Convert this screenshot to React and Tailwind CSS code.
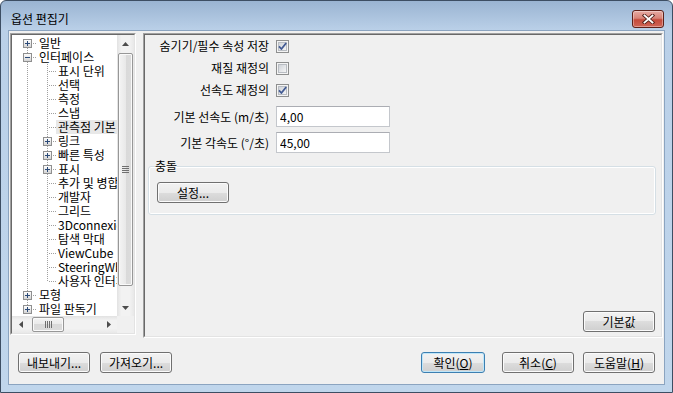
const TREE = [
  { label: "일반", level: 0, box: "+" },
  { label: "인터페이스", level: 0, box: "-" },
  { label: "표시 단위", level: 1 },
  { label: "선택", level: 1 },
  { label: "측정", level: 1 },
  { label: "스냅", level: 1 },
  { label: "관측점 기본", level: 1, selected: true },
  { label: "링크", level: 1, box: "+" },
  { label: "빠른 특성", level: 1, box: "+" },
  { label: "표시", level: 1, box: "+" },
  { label: "추가 및 병합", level: 1 },
  { label: "개발자", level: 1 },
  { label: "그리드", level: 1 },
  { label: "3Dconnexion", level: 1 },
  { label: "탐색 막대", level: 1 },
  { label: "ViewCube", level: 1 },
  { label: "SteeringWheels", level: 1 },
  { label: "사용자 인터페이스", level: 1, last: true },
  { label: "모형", level: 0, box: "+" },
  { label: "파일 판독기", level: 0, box: "+", last: true },
];

const DOT = { stroke: "#a0a0a0", strokeWidth: 1, strokeDasharray: "1 1", shapeRendering: "crispEdges" };

function Expander({ cx, sign }) {
  return (
    <g shapeRendering="crispEdges">
      <rect x={cx - 4} y="3.5" width="8" height="8" fill="url(#treebox)" stroke="#8f8f8f" />
      <line x1={cx - 2.5} y1="7.5" x2={cx + 2.5} y2="7.5" stroke="#2b4a78" />
      {sign === "+" && <line x1={cx} y1="5" x2={cx} y2="10" stroke="#2b4a78" />}
    </g>
  );
}

// dotted connector lines + expander box drawn per row
function Gutter({ item, first }) {
  const w = item.level === 0 ? 25 : 44;
  const cx = item.level === 0 ? 15.5 : 35.5;
  const top = first ? 7 : 0;
  const bottom = item.last ? 8 : 14;
  return (
    <svg width={w} height="14" className="shrink-0">
      <defs>
        <linearGradient id="treebox" x1="0" y1="0" x2="0" y2="1">
          <stop offset="0" stopColor="#ffffff" />
          <stop offset="1" stopColor="#d2d2d2" />
        </linearGradient>
      </defs>
      {item.level === 1 && <line x1="15.5" y1="0" x2="15.5" y2="14" {...DOT} />}
      {item.box ? (
        <>
          {top < 3 && <line x1={cx} y1={top} x2={cx} y2="3" {...DOT} />}
          {bottom > 12 && <line x1={cx} y1="12" x2={cx} y2={bottom} {...DOT} />}
          <line x1={cx + 5.5} y1="7.5" x2={w} y2="7.5" {...DOT} />
          <Expander cx={cx} sign={item.box} />
        </>
      ) : (
        <>
          <line x1={cx} y1={top} x2={cx} y2={bottom} {...DOT} />
          <line x1={cx + 1.5} y1="7.5" x2={w} y2="7.5" {...DOT} />
        </>
      )}
    </svg>
  );
}

function Arrow({ dir }) {
  const d = {
    up: "M0 4 L3.5 0 L7 4 Z",
    down: "M0 0 L7 0 L3.5 4 Z",
    left: "M4 0 L4 7 L0 3.5 Z",
    right: "M0 0 L0 7 L4 3.5 Z",
  }[dir];
  const vertical = dir === "up" || dir === "down";
  return (
    <svg width={vertical ? 7 : 4} height={vertical ? 4 : 7}>
      <path d={d} fill="#4d4d4d" />
    </svg>
  );
}

function VScroll() {
  return (
    <div className="flex w-[17px] shrink-0 flex-col bg-[linear-gradient(90deg,#e2e2e2,#f2f2f2_25%,#f2f2f2_75%,#e8e8e8)]">
      <div className="flex h-[17px] items-center justify-center">
        <Arrow dir="up" />
      </div>
      <div className="flex flex-1 flex-col">
        <div className="mx-[1px] mt-[1px] flex h-[233px] flex-col items-center justify-center gap-[1px] rounded-[2px] border border-[#979797] bg-[linear-gradient(90deg,#f4f4f4,#e9e9e9_50%,#d9d9d9_50%,#dcdcdc)] shadow-[inset_0_0_0_1px_#fafafa]">
          {[0, 1, 2, 3].map((i) => (
            <div key={i} className="h-[1px] w-[7px] bg-[#6f6f6f]" />
          ))}
        </div>
      </div>
      <div className="flex h-[17px] items-center justify-center">
        <Arrow dir="down" />
      </div>
    </div>
  );
}

function HScroll() {
  return (
    <div className="flex flex-1 bg-[linear-gradient(#e2e2e2,#f2f2f2_25%,#f2f2f2_75%,#e8e8e8)]">
      <div className="flex w-[17px] items-center justify-center">
        <Arrow dir="left" />
      </div>
      <div className="flex flex-1 items-stretch py-[1px]">
        <div className="ml-[3px] flex w-[32px] items-center justify-center gap-[1px] rounded-[2px] border border-[#979797] bg-[linear-gradient(#f4f4f4,#e9e9e9_50%,#d9d9d9_50%,#dcdcdc)] shadow-[inset_0_0_0_1px_#fafafa]">
          {[0, 1, 2, 3].map((i) => (
            <div key={i} className="h-[7px] w-[1px] bg-[#6f6f6f]" />
          ))}
        </div>
      </div>
      <div className="flex w-[17px] items-center justify-center">
        <Arrow dir="right" />
      </div>
    </div>
  );
}

function CheckBox({ checked }) {
  return (
    <svg width="13" height="13" viewBox="0 0 13 13" className="shrink-0">
      <defs>
        <linearGradient id="cbfill" x1="0" y1="0" x2="1" y2="1">
          <stop offset="0" stopColor="#cdd1d7" />
          <stop offset="1" stopColor="#f7f7f7" />
        </linearGradient>
      </defs>
      <rect x="0.5" y="0.5" width="12" height="12" fill="#f4f4f4" stroke="#8e8f8f" shapeRendering="crispEdges" />
      <rect x="2.5" y="2.5" width="8" height="8" fill="url(#cbfill)" stroke="#b9bdc3" shapeRendering="crispEdges" />
      {checked && (
        <path d="M3 6.4 L5.4 9 L10.2 3" fill="none" stroke="#425a93" strokeWidth="1.8" strokeLinejoin="round" />
      )}
    </svg>
  );
}

function WinButton({ children, className = "", isDefault = false }) {
  return (
    <button
      className={`flex h-[21px] shrink-0 items-center justify-center rounded-[3px] border text-[12px] leading-[14px] text-black bg-[linear-gradient(#f2f2f2_0%,#ebebeb_50%,#dddddd_50%,#cfcfcf_100%)] ${
        isDefault
          ? "border-[#3c7fb1] shadow-[inset_0_0_0_1px_#bfe6f9]"
          : "border-[#707070] shadow-[inset_0_0_0_1px_#fbfbfb]"
      } ${className}`}
    >
      {children}
    </button>
  );
}

function Field({ value }) {
  return (
    <input
      readOnly
      value={value}
      className="h-[21px] w-[114px] border border-[#c4c7cc] border-t-[#abadb3] bg-white pl-[3px] text-[12px] leading-[14px] text-black outline-none"
    />
  );
}

function Row({ label, children, className = "" }) {
  return (
    <div className={`flex items-center ${className}`}>
      <span className="w-[124px] whitespace-nowrap text-right leading-[14px]">{label}</span>
      <div className="ml-[7px] flex items-center">{children}</div>
    </div>
  );
}

function CloseButton() {
  return (
    <div className="mr-[8px] mt-[9px] flex h-[18px] w-[32px] items-center justify-center rounded-[3px] border border-[#5e2018] bg-[linear-gradient(#e6aba3_0%,#d88377_45%,#c44a3b_55%,#cf6556_100%)] shadow-[inset_0_0_0_1px_rgba(255,255,255,0.35)]">
      <svg width="13" height="10" viewBox="0 0 13 10">
        <path d="M2.5 1.5 L10.5 8.5 M10.5 1.5 L2.5 8.5" stroke="#55231c" strokeWidth="3.6" strokeLinecap="square" />
        <path d="M2.5 1.5 L10.5 8.5 M10.5 1.5 L2.5 8.5" stroke="#ffffff" strokeWidth="1.8" strokeLinecap="square" />
      </svg>
    </div>
  );
}

export default function App() {
  return (
    <div className="flex h-[393px] w-[673px] flex-col overflow-hidden rounded-t-[6px] border border-[#3d4e63] bg-[linear-gradient(#9ab4d2_0px,#bad0e8_29px,#c0d6ec_100%)] font-['Noto_Sans_CJK_KR','Liberation_Sans',sans-serif] text-[12px] text-black">
      {/* ── Title bar ── */}
      <div className="flex h-[29px] shrink-0 items-start justify-between">
        <span className="ml-[10px] mt-[11px] leading-[14px]">옵션 편집기</span>
        <CloseButton />
      </div>

      {/* ── Client area ── */}
      <div className="mx-[7px] mb-[7px] flex flex-1 flex-col border border-[#8ba4c0] bg-[#f0f0f0]">
        <div className="flex items-start gap-[7px] pl-[1px] pt-[2px]">
          {/* Tree */}
          <div className="flex h-[302px] w-[126px] shrink-0 flex-col border border-t-[#a0a0a0] border-l-[#a0a0a0] border-r-white border-b-white">
            <div className="flex min-h-0 flex-1 flex-col border border-t-[#696969] border-l-[#696969] border-r-[#e3e3e3] border-b-[#e3e3e3] bg-white">
              <div className="flex min-h-0 flex-1">
                <div className="w-[105px] shrink-0 overflow-hidden pt-[1px]">
                  {TREE.map((item, i) => (
                    <div key={item.label} className="flex h-[14px] items-center whitespace-nowrap">
                      <Gutter item={item} first={i === 0} />
                      <span className={`px-[2px] leading-[14px] ${item.selected ? "bg-[#e8e8e8]" : ""}`}>
                        {item.label}
                      </span>
                    </div>
                  ))}
                </div>
                <VScroll />
              </div>
              <div className="flex h-[17px] shrink-0">
                <HScroll />
                <div className="w-[17px] bg-[#f0f0f0]" />
              </div>
            </div>
          </div>

          {/* Settings page */}
          <div className="flex h-[305px] w-[520px] shrink-0 border border-t-[#a0a0a0] border-l-[#a0a0a0] border-r-white border-b-white">
            <div className="flex flex-1 flex-col border border-t-[#696969] border-l-[#696969] border-r-[#e3e3e3] border-b-[#e3e3e3]">
              <Row label="숨기기/필수 속성 저장" className="h-[22px]">
                <CheckBox checked />
              </Row>
              <Row label="재질 재정의" className="h-[22px]">
                <CheckBox />
              </Row>
              <Row label="선속도 재정의" className="h-[22px]">
                <CheckBox checked />
              </Row>
              <Row label="기본 선속도 (m/초)" className="mt-[5px] h-[21px]">
                <Field value="4,00" />
              </Row>
              <Row label="기본 각속도 (°/초)" className="mt-[5px] h-[21px]">
                <Field value="45,00" />
              </Row>

              <fieldset className="ml-[3px] mt-[6px] w-[508px] rounded-[3px] border border-[#d5dfe5] px-[6px] pb-[11px] shadow-[inset_0_0_0_1px_#ffffff]">
                <legend className="leading-[14px]">충돌</legend>
                <WinButton className="ml-[2px] mt-[9px] w-[72px]">설정...</WinButton>
              </fieldset>

              <div className="flex-1" />
              <WinButton className="mb-[4px] mr-[6px] w-[72px] self-end">기본값</WinButton>
            </div>
          </div>
        </div>

        {/* ── Footer buttons ── */}
        <div className="mt-[14px] flex items-center px-[9px]">
          <WinButton className="w-[72px]">내보내기...</WinButton>
          <WinButton className="ml-[10px] w-[72px]">가져오기...</WinButton>
          <div className="flex-1" />
          <WinButton isDefault className="w-[64px]">
            확인(<u>O</u>)
          </WinButton>
          <WinButton className="ml-[17px] w-[72px]">
            취소(<u>C</u>)
          </WinButton>
          <WinButton className="ml-[9px] w-[72px]">
            도움말(<u>H</u>)
          </WinButton>
        </div>
      </div>
    </div>
  );
}
